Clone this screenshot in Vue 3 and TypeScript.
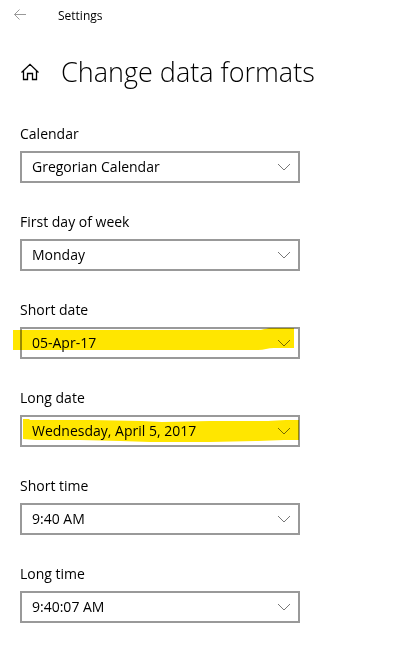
<script setup lang="ts">
import { reactive } from 'vue'

interface Field {
  id: string
  label: string
  options: string[]
  marker?: string
}

const fields: Field[] = [
  { id: 'calendar', label: 'Calendar', options: ['Gregorian Calendar'] },
  { id: 'first-day', label: 'First day of week', options: ['Monday', 'Sunday'] },
  {
    id: 'short-date',
    label: 'Short date',
    options: ['05-Apr-17'],
    marker: 'M-7 3H238C244 3 246 1 252 1H274V21H254C248 21 244 23 238 23H-7Z',
  },
  {
    id: 'long-date',
    label: 'Long date',
    options: ['Wednesday, April 5, 2017'],
    marker: 'M3 4H9L10 5H70L122 6L142 7L190 6H248L266 5H279V25H264L238 26L190 27H130L100 26L60 25H16L3 24Z',
  },
  { id: 'short-time', label: 'Short time', options: ['9:40 AM'] },
  { id: 'long-time', label: 'Long time', options: ['9:40:07 AM'] },
]

const values = reactive<Record<string, string>>(
  Object.fromEntries(fields.map((f) => [f.id, f.options[0]])),
)
</script>

<template>
  <div class="page">
    <header class="bar">
      <button class="back" type="button" aria-label="Back">
        <svg viewBox="0 0 14 12" width="14" height="12">
          <path d="M13 5.5H1.5M6.5 0.5L1.5 5.5L6.5 10.5" />
        </svg>
      </button>
      <span class="app-name">Settings</span>
    </header>

    <main>
      <div class="heading">
        <a class="home" href="#" aria-label="Home">
          <svg viewBox="0 0 20 20" width="20" height="20">
            <path d="M1.5 10.5L10 2.3L18.5 10.5M3.5 9V17.5H7.5V11.5H12.5V17.5H16.5V9" />
          </svg>
        </a>
        <h1>Change data formats</h1>
      </div>

      <form class="fields" @submit.prevent>
        <div v-for="field in fields" :key="field.id" class="field">
          <label :for="field.id">{{ field.label }}</label>
          <div class="control">
            <select :id="field.id" v-model="values[field.id]">
              <option v-for="option in field.options" :key="option">{{ option }}</option>
            </select>
            <svg class="chevron" viewBox="0 0 14 8" width="14" height="8" aria-hidden="true">
              <path d="M1 1L7 7L13 1" />
            </svg>
            <svg v-if="field.marker" class="marker" viewBox="0 0 280 32" width="280" height="32" aria-hidden="true">
              <path :d="field.marker" />
            </svg>
          </div>
        </div>
      </form>
    </main>
  </div>
</template>

<style>
body {
  margin: 0;
  background: #fff;
}
</style>

<style scoped>
.page {
  font-family: "Open Sans", "Noto Sans", sans-serif;
  color: #000;
}

.bar {
  display: flex;
  align-items: center;
  height: 32px;
  padding-left: 13px;
}

.back {
  display: flex;
  width: 45px;
  padding: 0;
  border: 0;
  background: none;
}

.back svg {
  margin-bottom: 3px;
}

svg path {
  fill: none;
  stroke: currentColor;
}

.back path {
  stroke: #999;
}

.app-name {
  font-size: 12px;
  line-height: 16px;
}

main {
  padding: 16px 20px;
}

.heading {
  display: flex;
  align-items: center;
  height: 48px;
}

.home {
  display: flex;
  width: 41px;
  color: #000;
}

.home path {
  stroke-width: 1.3;
}

h1 {
  margin: 0;
  font-size: 27px;
  font-weight: 340;
  line-height: 40px;
  white-space: nowrap;
}

.fields {
  display: grid;
  gap: 28px;
  max-width: 280px;
  padding-top: 28px;
}

.field {
  display: grid;
  gap: 7px;
}

.field + .field {
  padding-top: 1px;
}

label {
  font-size: 14px;
  line-height: 20px;
}

.control {
  position: relative;
  height: 32px;
}

select {
  display: block;
  box-sizing: border-box;
  width: 100%;
  height: 32px;
  padding: 0 32px 2px 10px;
  border: 2px solid #999;
  border-radius: 0;
  appearance: none;
  background: #fff;
  color: #000;
  font: inherit;
  font-size: 14px;
}

.chevron {
  position: absolute;
  top: 12px;
  right: 9px;
  color: #777;
  pointer-events: none;
}

.marker {
  position: absolute;
  top: 0;
  left: 0;
  overflow: visible;
  mix-blend-mode: multiply;
  pointer-events: none;
}

.marker path {
  fill: #ffe600;
  stroke: none;
}
</style>
